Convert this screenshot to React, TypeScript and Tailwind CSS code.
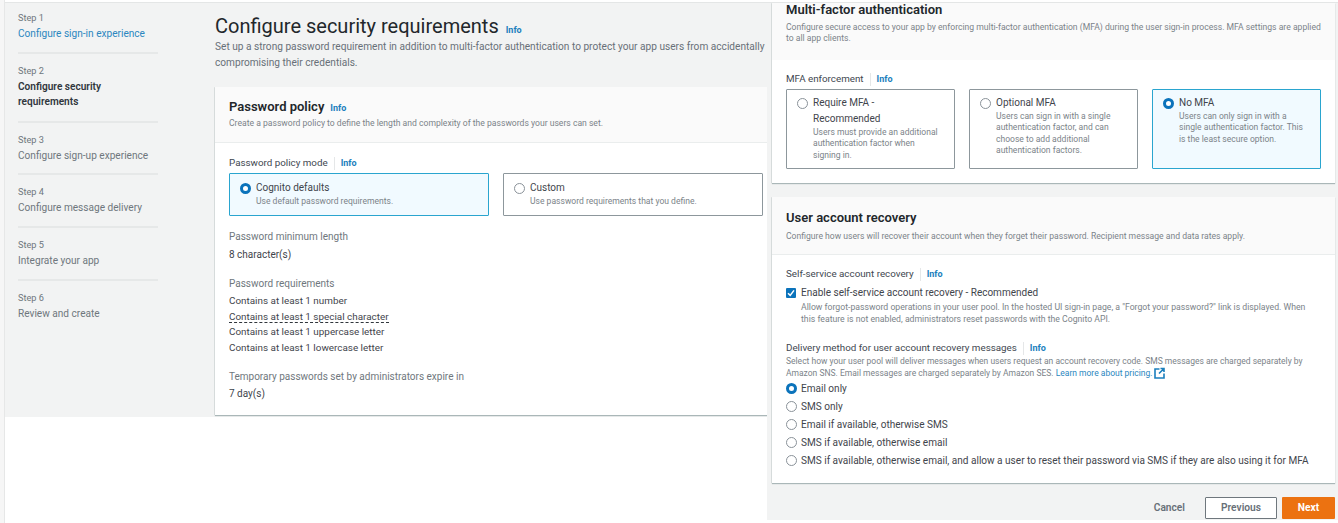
const steps = [
  { label: "Step 1", title: "Configure sign-in experience", color: "text-[#2b87c0]", pb: "pb-[11px]" },
  { label: "Step 2", title: "Configure security requirements", color: "text-[#30363c] font-semibold", pb: "pb-[12px]" },
  { label: "Step 3", title: "Configure sign-up experience", color: "text-[#6f777d]", pb: "pb-[10px]" },
  { label: "Step 4", title: "Configure message delivery", color: "text-[#6f777d]", pb: "pb-[11px]" },
  { label: "Step 5", title: "Integrate your app", color: "text-[#6f777d]", pb: "pb-[11px]" },
  { label: "Step 6", title: "Review and create", color: "text-[#6f777d]", pb: "" },
];

const requirements = [
  "Contains at least 1 number",
  "Contains at least 1 special character",
  "Contains at least 1 uppercase letter",
  "Contains at least 1 lowercase letter",
];

const deliveryOptions = [
  "Email only",
  "SMS only",
  "Email if available, otherwise SMS",
  "SMS if available, otherwise email",
  "SMS if available, otherwise email, and allow a user to reset their password via SMS if they are also using it for MFA",
];

const cardClass = "bg-white shadow-[0_1px_1px_#aab7b8,-1px_0_0_#dfe3e3]";

const Info = ({ className = "" }: { className?: string }) => (
  <span className={`block text-[9px] font-bold leading-none text-[#1b7fbd] ${className}`}>Info</span>
);

const FieldLabel = ({ text }: { text: string }) => (
  <div className="flex items-center text-[9.8px] leading-[14px] text-[#414750]">
    <span>{text}</span>
    <span className="mx-[6px] h-[13px] w-px bg-[#e5e7e8]" />
    <Info />
  </div>
);

const Radio = ({ checked }: { checked?: boolean }) =>
  checked ? (
    <span className="block h-[11px] w-[11px] shrink-0 rounded-full border-[3px] border-[#0b73bb] bg-white" />
  ) : (
    <span className="block h-[11px] w-[11px] shrink-0 rounded-full border border-[#8a9299] bg-white" />
  );

const Tile = ({
  title,
  desc,
  checked,
  className,
}: {
  title: string;
  desc: string;
  checked?: boolean;
  className: string;
}) => (
  <div
    className={`flex gap-[5px] rounded-[1px] border px-[10px] ${className} ${
      checked ? "border-[#2aa5cf] bg-[#f1faff]" : "border-[#8d979c] bg-white"
    }`}
  >
    <span className="mt-[3px]">
      <Radio checked={checked} />
    </span>
    <div className="min-w-0">
      <div className="text-[10px] leading-[16px] text-[#3f454c]">{title}</div>
      <div className="text-[8.55px] leading-[11.3px] text-[#7b8389]">{desc}</div>
    </div>
  </div>
);

export default function App() {
  return (
    <div className="flex h-[523px] w-[1338px] overflow-hidden bg-white font-['Roboto',sans-serif]">
      <div className="w-[5px] shrink-0 border-r border-[#e6e7e7] bg-[#f6f6f6]" />
      <div className="w-[762px] shrink-0 pt-[2px]">
        <div className="flex h-[415px] border-t border-[#e4e6e6] bg-[#f2f3f3]">
          <nav className="w-[153px] shrink-0 pl-[13px] pt-[8px]">
            {steps.map((s, i) => (
              <div key={s.label} className={i < 5 ? `mb-[10px] border-b-2 border-[#e6e8e8] ${s.pb}` : ""}>
                <div className="text-[9.2px] leading-[13px] text-[#6f777d]">{s.label}</div>
                <div className={`mt-[2px] w-[140px] text-[10.1px] leading-[15px] ${s.color}`}>{s.title}</div>
              </div>
            ))}
          </nav>
          <main className="min-w-0 flex-1 pl-[57px]">
            <div className="flex items-center pt-[10px]">
              <h1 className="text-[20px] leading-[26px] text-[#22272b]">Configure security requirements</h1>
              <Info className="ml-[7px] mt-[8px]" />
            </div>
            <p className="whitespace-nowrap text-[10.15px] leading-[16px] text-[#687078]">
              Set up a strong password requirement in addition to multi-factor authentication to protect your app users from accidentally
              <br />
              compromising their credentials.
            </p>
            <section className={`mt-[16px] h-[328px] ${cardClass}`}>
              <header className="h-[56px] border-b border-[#eaeded] bg-[#fafafa] px-[14px] pt-[11px]">
                <div className="flex items-center">
                  <h2 className="text-[13px] font-semibold leading-[18px] text-[#22272b]">Password policy</h2>
                  <Info className="ml-[6px] mt-[3px]" />
                </div>
                <p className="text-[8.6px] leading-[14px] text-[#7b8389]">
                  Create a password policy to define the length and complexity of the passwords your users can set.
                </p>
              </header>
              <div className="px-[14px] pt-[13px]">
                <FieldLabel text="Password policy mode" />
                <div className="mt-[3px] flex w-[534px] gap-[14px]">
                  <Tile
                    checked
                    title="Cognito defaults"
                    desc="Use default password requirements."
                    className="h-[43px] w-[260px] pt-[6px]"
                  />
                  <Tile
                    title="Custom"
                    desc="Use password requirements that you define."
                    className="h-[43px] w-[260px] pt-[6px]"
                  />
                </div>
                <div className="mt-[13px] text-[10px] leading-[15px] text-[#6f777d]">Password minimum length</div>
                <div className="mt-[3px] text-[10px] leading-[15px] text-[#3f454c]">8 character(s)</div>
                <div className="mt-[14px] text-[10px] leading-[15px] text-[#6f777d]">Password requirements</div>
                <ul className="mt-[2px] text-[9.9px] leading-[15.5px] text-[#3f454c]">
                  {requirements.map((r, i) => (
                    <li key={r}>
                      <span className={i === 1 ? "border-b border-dashed border-[#30363c]" : ""}>{r}</span>
                    </li>
                  ))}
                </ul>
                <div className="mt-[14px] text-[10px] leading-[15px] text-[#6f777d]">Temporary passwords set by administrators expire in</div>
                <div className="mt-[2px] text-[10px] leading-[15px] text-[#3f454c]">7 day(s)</div>
              </div>
            </section>
          </main>
        </div>
      </div>
      <div className="mt-[2px] h-[518px] w-[571px] shrink-0 border-t border-[#e4e6e6] bg-[#f2f3f3] pl-[5px] pr-[3px]">
        <section className={`h-[180px] ${cardClass}`}>
          <header className="h-[57px] bg-[#fafafa] px-[14px]">
            <h2 className="text-[13px] font-semibold leading-[14px] text-[#22272b]">Multi-factor authentication</h2>
            <p className="mt-[5px] text-[8.6px] leading-[11.3px] text-[#7b8389]">
              Configure secure access to your app by enforcing multi-factor authentication (MFA) during the user sign-in process. MFA settings are applied to all app clients.
            </p>
          </header>
          <div className="px-[14px] pt-[12px]">
            <FieldLabel text="MFA enforcement" />
            <div className="mt-[3px] flex gap-[14px]">
              <Tile
                title="Require MFA - Recommended"
                desc="Users must provide an additional authentication factor when signing in."
                className="h-[80px] w-[169px] pt-[5px]"
              />
              <Tile
                title="Optional MFA"
                desc="Users can sign in with a single authentication factor, and can choose to add additional authentication factors."
                className="h-[80px] w-[169px] pt-[5px]"
              />
              <Tile
                checked
                title="No MFA"
                desc="Users can only sign in with a single authentication factor. This is the least secure option."
                className="h-[80px] w-[169px] pt-[5px]"
              />
            </div>
          </div>
        </section>
        <section className={`mt-[14px] h-[286px] ${cardClass}`}>
          <header className="h-[58px] border-b border-[#eaeded] bg-[#fafafa] px-[14px] pt-[13px]">
            <h2 className="text-[13px] font-semibold leading-[16px] text-[#22272b]">User account recovery</h2>
            <p className="mt-[3px] text-[8.6px] leading-[14px] text-[#7b8389]">
              Configure how users will recover their account when they forget their password. Recipient message and data rates apply.
            </p>
          </header>
          <div className="px-[14px] pt-[12px]">
            <FieldLabel text="Self-service account recovery" />
            <div className="mt-[5px] flex gap-[5px]">
              <span className="mt-[2px] flex h-[10px] w-[10px] shrink-0 items-center justify-center rounded-[1px] bg-[#0b73bb]">
                <svg width="8" height="8" viewBox="0 0 8 8" fill="none">
                  <path d="M1 4.2 3.2 6.4 7 1.4" stroke="white" strokeWidth="1.5" />
                </svg>
              </span>
              <div>
                <div className="text-[10px] leading-[14px] text-[#3f454c]">Enable self-service account recovery - Recommended</div>
                <div className="mt-[1px] text-[8.7px] leading-[12px] text-[#7b8389]">
                  Allow forgot-password operations in your user pool. In the hosted UI sign-in page, a "Forgot your password?" link is displayed. When this feature is not enabled, administrators reset passwords with the Cognito API.
                </div>
              </div>
            </div>
            <div className="mt-[16px]">
              <FieldLabel text="Delivery method for user account recovery messages" />
            </div>
            <p className="mt-[1px] text-[8.5px] leading-[11.3px] text-[#7b8389]">
              Select how your user pool will deliver messages when users request an account recovery code. SMS messages are charged separately by Amazon SNS. Email messages are charged separately by Amazon SES. <span className="text-[#2b87c0]">Learn more about pricing.</span>
              <svg className="ml-[1px] inline align-[-3px]" width="11" height="12" viewBox="0 0 11 12" fill="none" stroke="#1b7fbd" strokeWidth="1.6">
                <path d="M5.5 2H1v9h9V6.5M6.5 1.500H10V5M10 1.500 5 6.500" />
              </svg>
            </p>
            <div>
              {deliveryOptions.map((o, i) => (
                <div key={o} className="flex h-[18px] items-center gap-[4px] text-[10.05px] text-[#3f454c]">
                  <Radio checked={i === 0} />
                  <span className="whitespace-nowrap">{o}</span>
                </div>
              ))}
            </div>
          </div>
        </section>
        <div className="mt-[14px] flex items-center justify-end">
          <span className="mr-[20px] text-[10.2px] font-semibold text-[#687078]">Cancel</span>
          <button className="h-[22px] w-[72px] rounded-[1px] border border-[#6f777d] bg-white text-[10.2px] font-semibold text-[#687078]">Previous</button>
          <button className="ml-[5px] h-[22px] w-[53px] rounded-[1px] bg-[#ec7211] text-[10.2px] font-bold text-white">Next</button>
        </div>
      </div>
    </div>
  );
}
